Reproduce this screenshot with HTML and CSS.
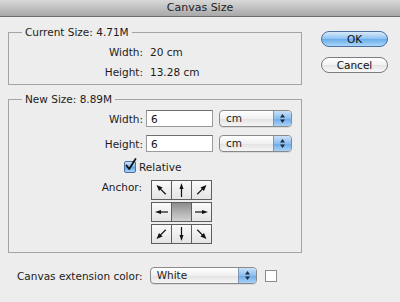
FILE: index.html
```html
<!DOCTYPE html>
<html lang="en">
<head>
  <meta charset="UTF-8">
  <meta name="viewport" content="width=device-width, initial-scale=1.0">
  <title>Canvas Size</title>
  <link rel="stylesheet" href="styles.css">
</head>
<body>

<div class="window">
  <div class="titlebar">Canvas Size</div>

  <div class="content">
    <div class="main">

      <!-- Current size -->
      <fieldset class="group current">
        <legend>Current Size: 4.71M</legend>
        <div class="fields">
          <span class="label">Width:</span>
          <span class="value">20 cm</span>
          <span class="label">Height:</span>
          <span class="value">13.28 cm</span>
        </div>
      </fieldset>

      <!-- New size -->
      <fieldset class="group newsize">
        <legend>New Size: 8.89M</legend>
        <div class="fields">
          <label class="label" for="newWidth">Width:</label>
          <div class="control">
            <input type="text" id="newWidth" class="number" value="6">
            <div class="popup unit"><span class="popup-text">cm</span><span class="popup-arrows"><svg width="7" height="11" viewBox="0 0 7 11"><polygon points="3.5,1 6,4.5 1,4.5" fill="#1d2b3f"/><polygon points="3.5,10 6,6.5 1,6.5" fill="#1d2b3f"/></svg></span></div>
          </div>
          <label class="label" for="newHeight">Height:</label>
          <div class="control">
            <input type="text" id="newHeight" class="number" value="6">
            <div class="popup unit"><span class="popup-text">cm</span><span class="popup-arrows"><svg width="7" height="11" viewBox="0 0 7 11"><polygon points="3.5,1 6,4.5 1,4.5" fill="#1d2b3f"/><polygon points="3.5,10 6,6.5 1,6.5" fill="#1d2b3f"/></svg></span></div>
          </div>
        </div>

        <div class="relative">
          <span class="check"><svg width="13" height="14" viewBox="0 0 13 14"><path d="M2.5 7.5 L5.2 11 L11.5 1" fill="none" stroke="#111" stroke-width="1.8" stroke-linecap="round" stroke-linejoin="round"/></svg></span>
          <span>Relative</span>
        </div>

        <div class="anchor">
          <span class="label">Anchor:</span>
          <div class="pad">
            <div class="pad-row">
              <span class="cell"><svg width="19" height="18" viewBox="0 0 19 18"><g transform="rotate(-45 9.5 9)"><line x1="9.5" y1="15" x2="9.5" y2="6" stroke="#111" stroke-width="1.2"/><polygon points="9.5,2 7,8 12,8" fill="#111"/></g></svg></span>
              <span class="cell"><svg width="19" height="18" viewBox="0 0 19 18"><line x1="9.5" y1="16" x2="9.5" y2="6" stroke="#111" stroke-width="1.2"/><polygon points="9.5,2 7.5,8 11.5,8" fill="#111"/></svg></span>
              <span class="cell"><svg width="19" height="18" viewBox="0 0 19 18"><g transform="rotate(45 9.5 9)"><line x1="9.5" y1="15" x2="9.5" y2="6" stroke="#111" stroke-width="1.2"/><polygon points="9.5,2 7,8 12,8" fill="#111"/></g></svg></span>
            </div>
            <div class="pad-row">
              <span class="cell"><svg width="19" height="18" viewBox="0 0 19 18"><line x1="16" y1="9" x2="7" y2="9" stroke="#111" stroke-width="1.2"/><polygon points="3,9 9,7 9,11" fill="#111"/></svg></span>
              <span class="cell selected"></span>
              <span class="cell"><svg width="19" height="18" viewBox="0 0 19 18"><line x1="3" y1="9" x2="12" y2="9" stroke="#111" stroke-width="1.2"/><polygon points="16,9 10,7 10,11" fill="#111"/></svg></span>
            </div>
            <div class="pad-row">
              <span class="cell"><svg width="19" height="18" viewBox="0 0 19 18"><g transform="rotate(-135 9.5 9)"><line x1="9.5" y1="15" x2="9.5" y2="6" stroke="#111" stroke-width="1.2"/><polygon points="9.5,2 7,8 12,8" fill="#111"/></g></svg></span>
              <span class="cell"><svg width="19" height="18" viewBox="0 0 19 18"><line x1="9.5" y1="2" x2="9.5" y2="12" stroke="#111" stroke-width="1.2"/><polygon points="9.5,16 7.5,10 11.5,10" fill="#111"/></svg></span>
              <span class="cell"><svg width="19" height="18" viewBox="0 0 19 18"><g transform="rotate(135 9.5 9)"><line x1="9.5" y1="15" x2="9.5" y2="6" stroke="#111" stroke-width="1.2"/><polygon points="9.5,2 7,8 12,8" fill="#111"/></g></svg></span>
            </div>
          </div>
        </div>
      </fieldset>

      <!-- Extension color -->
      <div class="extension">
        <span>Canvas extension color:</span>
        <div class="popup color"><span class="popup-text">White</span><span class="popup-arrows"><svg width="7" height="11" viewBox="0 0 7 11"><polygon points="3.5,1 6,4.5 1,4.5" fill="#1d2b3f"/><polygon points="3.5,10 6,6.5 1,6.5" fill="#1d2b3f"/></svg></span></div>
        <span class="swatch"></span>
      </div>
    </div>

    <div class="actions">
      <button class="btn default">OK</button>
      <button class="btn">Cancel</button>
    </div>
  </div>
</div>

</body>
</html>
```

FILE: styles.css
```css
body {
  margin: 0;
  font-family: "DejaVu Sans", sans-serif;
  font-size: 10.5px;
  color: #1c1c1c;
}
.window {
  width: 400px;
  height: 302px;
  background-color: #ededed;
  overflow: hidden;
}
.titlebar {
  height: 16px;
  line-height: 16px;
  text-align: center;
  font-size: 11px;
  color: #222;
  background: linear-gradient(#d8d8d8, #a8a8a8);
  border-bottom: 1px solid #6e6e6e;
}
.content {
  display: flex;
  padding: 9px 0 0 8px;
}
.main {
  width: 294px;
}
.group {
  margin: 0;
  padding: 3px 0 4px 13px;
  border: 1px solid #a4a4a4;
}
.group legend {
  padding: 0 3px;
  line-height: 13px;
}
.fields {
  display: grid;
  grid-template-columns: 121px auto;
  column-gap: 3px;
  align-items: center;
}
.label {
  text-align: right;
}
.current {
  padding-bottom: 2px;
}
.current .fields {
  line-height: 20px;
}
.current .value {
  padding-left: 4px;
}
.newsize {
  margin-top: 8px;
  padding-bottom: 8px;
}
.newsize .fields {
  row-gap: 8px;
  margin-top: 1px;
}
.control {
  display: flex;
  gap: 6px;
}
.number {
  width: 67px;
  height: 17px;
  box-sizing: border-box;
  margin: 0;
  padding: 0 4px;
  font: inherit;
  color: #111;
  background-color: #fff;
  border: 1px solid #9a9a9a;
  border-top-color: #6f6f6f;
  outline: none;
}
.popup {
  display: flex;
  height: 17px;
  box-sizing: border-box;
  border: 1px solid #8a8a8a;
  border-radius: 4px;
  background: linear-gradient(#ffffff, #f0f0f0 50%, #e2e2e2 51%, #f6f6f6);
  box-shadow: 0 1px 0 rgba(0, 0, 0, 0.08);
}
.popup-text {
  flex: 1;
  padding-left: 6px;
  line-height: 15px;
}
.popup-arrows {
  width: 17px;
  display: flex;
  align-items: center;
  justify-content: center;
  border-left: 1px solid #8094b4;
  border-radius: 0 3px 3px 0;
  background: linear-gradient(#c9e1f8, #8cbdef 50%, #6ea9e8 51%, #a8d2f8);
}
.unit {
  width: 73px;
}
.color {
  width: 107px;
}
.relative {
  display: flex;
  align-items: center;
  gap: 3px;
  height: 13px;
  padding-left: 102px;
  margin-top: 8px;
}
.check {
  position: relative;
  width: 12px;
  height: 12px;
  box-sizing: border-box;
  border: 1px solid #4d6f9f;
  border-radius: 2px;
  background: linear-gradient(#cfe5fa, #79b3ec 50%, #5fa2e6 51%, #a9d3f9);
}
.check svg {
  position: absolute;
  left: -1px;
  top: -4px;
}
.anchor {
  display: grid;
  grid-template-columns: 120px auto;
  column-gap: 9px;
  margin-top: 7px;
}
.anchor .label {
  line-height: 13px;
  padding-top: 1px;
}
.pad {
  display: flex;
  flex-direction: column;
  gap: 2px;
}
.pad-row {
  display: grid;
  grid-template-columns: repeat(3, 19px);
  grid-auto-rows: 18px;
  gap: 1px;
  width: max-content;
  background-color: #5e5e5e;
  border: 1px solid #5e5e5e;
}
.cell {
  display: block;
  background: linear-gradient(#fafafa, #e4e4e4);
}
.cell svg {
  display: block;
}
.cell.selected {
  background: linear-gradient(#8e8e8e, #d2d2d2);
}
.extension {
  display: flex;
  align-items: center;
  gap: 7px;
  margin-top: 14px;
  padding-left: 9px;
}
.swatch {
  width: 12px;
  height: 12px;
  margin-left: 1px;
  box-sizing: border-box;
  background-color: #fff;
  border: 1px solid #8c8c8c;
}
.actions {
  display: flex;
  flex-direction: column;
  gap: 10px;
  margin-left: 19px;
  padding-top: 5px;
}
.btn {
  width: 67px;
  height: 16px;
  padding: 0;
  font: inherit;
  line-height: 14px;
  color: #111;
  border: 1px solid #7c7c7c;
  border-radius: 8px;
  background: linear-gradient(#ffffff, #f2f2f2 50%, #e4e4e4 51%, #f8f8f8);
}
.btn.default {
  border-color: #4f6f9f;
  background: linear-gradient(#d8eafb, #8ec2f2 48%, #6aaee9 52%, #a9d6fb);
}
```
